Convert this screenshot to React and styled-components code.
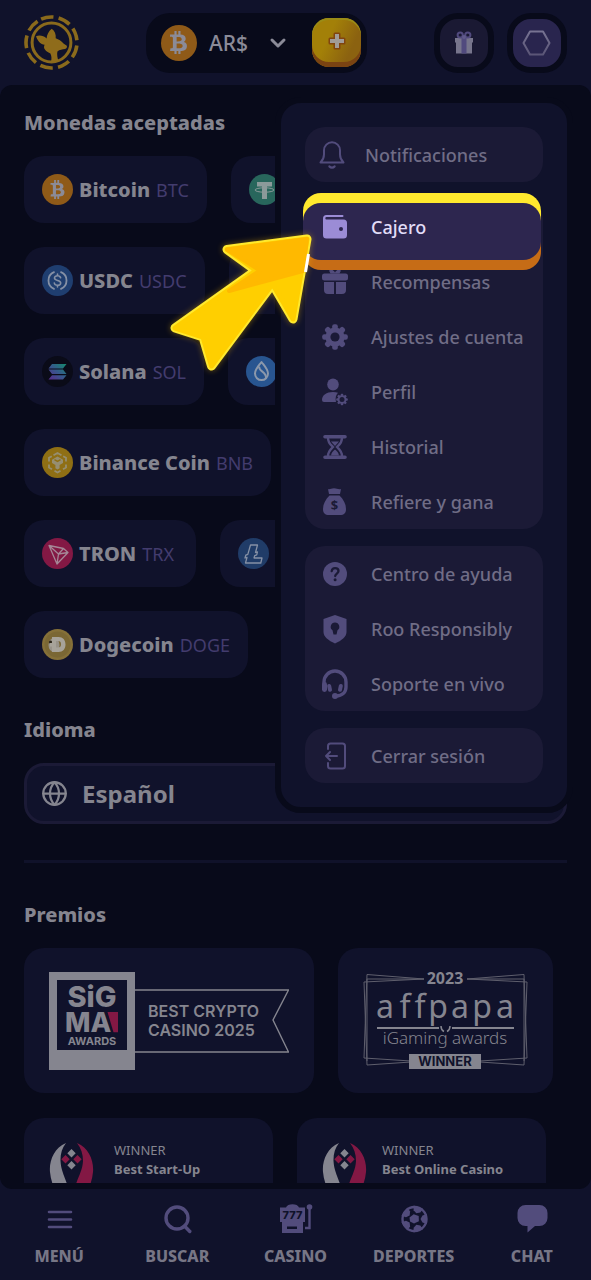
import styled, { createGlobalStyle } from "styled-components";
import { FaBtc } from "react-icons/fa";
import { ChevronDown, Globe } from "lucide-react";

const GlobalStyle = createGlobalStyle`
  :root {
    --panel: #10122b;
    --deep: #080a1a;
    --group: #1b1a36;
    --text: #85858f;
    --menu-text: #706d86;
    --violet: #524c7c;
    --code: #433c6e;
    --silver: #85858f;
    --crimson: #831844;
  }

  * {
    box-sizing: border-box;
  }

  body {
    margin: 0;
    background: var(--panel);
    color: var(--text);
    font-family: "Noto Sans", "Open Sans", sans-serif;
  }

  button,
  select {
    font: inherit;
    color: inherit;
    border: 0;
    background: none;
    padding: 0;
  }

  svg {
    display: block;
    flex: none;
  }
`;

const Shell = styled.div`
  display: flex;
  flex-direction: column;
  height: 100vh;
  overflow: hidden;
`;

/* ---------- header ---------- */

const Header = styled.header`
  display: flex;
  align-items: center;
  justify-content: space-between;
  height: 85px;
  flex: none;
  padding: 0 24px;
`;

const Wallet = styled.div`
  display: flex;
  align-items: center;
  height: 60px;
  padding: 0 6px 0 15px;
  border-radius: 24px;
  background: var(--deep);
`;

const CurrencyButton = styled.button`
  display: flex;
  align-items: center;
  gap: 12px;
  margin-right: 22px;
  font-size: 21px;
  font-weight: 500;
  color: #8b8b98;

  & > svg:last-child {
    margin-left: 6px;
  }
`;

const Coin = styled.span`
  display: flex;
  align-items: center;
  justify-content: center;
  flex: none;
  width: ${(p) => p.$size || 31}px;
  height: ${(p) => p.$size || 31}px;
  border-radius: 50%;
  overflow: hidden;
  color: #8b8b98;
  background: ${(p) => p.$color};
`;

const AddButton = styled.button`
  display: flex;
  align-items: center;
  justify-content: center;
  width: 49px;
  height: 49px;
  padding-bottom: 3px;
  border-radius: 17px;
  background: linear-gradient(115deg, #a38008 35%, #8b6210 75%);
  box-shadow: inset 0 -5px 0 #7a4312, inset 0 2px 0 #9a8c17;
`;

const Actions = styled.div`
  display: flex;
  gap: 13px;
`;

const RoundButton = styled.button`
  display: flex;
  align-items: center;
  justify-content: center;
  width: 60px;
  height: 60px;
  border: 6px solid var(--deep);
  border-radius: 24px;
  background: ${(p) => (p.$active ? "#29254e" : "#1a1933")};
`;

/* ---------- page ---------- */

const Main = styled.main`
  position: relative;
  display: flex;
  flex: 1;
  min-height: 0;
  padding-bottom: 6px;
  border-radius: 12px;
  background: var(--deep);
`;

const Scroller = styled.div`
  flex: 1;
  min-width: 0;
  overflow: hidden;
  padding: 26px 24px 0;
`;

const Title = styled.h2`
  margin: 0 0 22px;
  font-size: 20px;
  line-height: 23px;
  font-weight: 800;
`;

const Section = styled.section`
  margin-bottom: 40px;
`;

const CoinRow = styled.div`
  display: flex;
  gap: 24px;
  margin-bottom: 24px;

  &:last-child {
    margin-bottom: 0;
  }
`;

const CoinCard = styled.div`
  display: flex;
  align-items: center;
  flex: none;
  gap: 6px;
  min-width: 172px;
  height: 67px;
  padding: 0 18px;
  border-radius: 20px;
  background: var(--panel);
`;

const CoinName = styled.span`
  font-size: 20px;
  font-weight: 800;
`;

const CoinCode = styled.span`
  font-size: 18px;
  color: var(--code);
`;

const LanguageBox = styled.label`
  display: flex;
  align-items: center;
  gap: 14px;
  height: 61px;
  padding: 0 14px;
  border: 3px solid var(--group);
  border-radius: 20px;
  background: var(--panel);
`;

const LanguageSelect = styled.select`
  flex: 1;
  appearance: none;
  font-size: 24px;
  font-weight: 700;
`;

const Divider = styled.hr`
  height: 3px;
  margin: -4px 0 40px;
  border: 0;
  background: #10122a;
`;

const AwardRow = styled.div`
  display: flex;
  gap: 24px;
  margin-bottom: 25px;
`;

const AwardCard = styled.div`
  display: flex;
  align-items: center;
  flex: none;
  gap: ${(p) => p.$gap || 0}px;
  min-width: ${(p) => (p.$gap ? 249 : 0)}px;
  height: 145px;
  padding: 0 25px;
  border-radius: 20px;
  background: var(--panel);
`;

const AwardText = styled.p`
  align-self: flex-start;
  margin: 23px 0 0;
  font-size: 13px;
  line-height: 19px;
  font-weight: 700;
  white-space: nowrap;

  span {
    display: block;
    font-weight: 400;
  }
`;

/* ---------- account menu ---------- */

const Menu = styled.nav`
  position: absolute;
  top: 12px;
  right: 18px;
  display: flex;
  flex-direction: column;
  gap: 17px;
  width: 298px;
  padding: 24px;
  border: 6px solid var(--deep);
  border-radius: 26px;
  background: var(--panel);
`;

const MenuGroup = styled.div`
  border-radius: 20px;
  background: var(--group);
`;

const MenuItem = styled.button`
  position: relative;
  z-index: ${(p) => (p.$active ? 1 : 0)};
  display: flex;
  align-items: center;
  gap: ${(p) => (p.$tight ? 19 : 23)}px;
  width: 100%;
  height: 55px;
  padding-left: ${(p) => (p.$tight ? 13 : 17)}px;
  font-size: 18px;
  font-weight: 500;
  text-align: left;
  color: ${(p) => (p.$active ? "#e2ddf8" : "var(--menu-text)")};

  & > svg {
    position: relative;
    color: ${(p) => (p.$active ? "#9b8cd6" : "var(--violet)")};
  }

  & > span {
    position: relative;
  }
`;

const Highlight = styled.i`
  position: absolute;
  inset: -6px 2px -16px -2px;
  padding: 10px 0;
  border-radius: 18px;
  background: linear-gradient(#ffe92e 50%, #c66c16 50%);

  &::before {
    content: "";
    display: block;
    height: 100%;
    border-radius: 18px;
    background: #2d264f;
  }
`;

const Pointer = styled.svg`
  position: absolute;
  z-index: 2;
  top: 140px;
  right: 271px;
  filter: drop-shadow(0 0 3px rgba(255, 190, 0, 0.4));
`;

/* ---------- bottom bar ---------- */

const TabBar = styled.nav`
  display: grid;
  grid-template-columns: repeat(5, 1fr);
  flex: none;
  height: 91px;
`;

const Tab = styled.a`
  display: flex;
  flex-direction: column;
  align-items: center;
  gap: 7px;
  padding-top: 12px;
  font-size: 16px;
  line-height: 24px;
  font-weight: 800;
  text-decoration: none;
  color: #777686;

  & > svg {
    color: var(--violet);
  }
`;

/* ---------- drawings ---------- */

const Gear = ({ cx, cy, r, hole, bg }) => (
  <g>
    {[0, 45, 90, 135].map((a) => (
      <rect
        key={a}
        x={cx - r * 0.22}
        y={cy - r}
        width={r * 0.44}
        height={r * 2}
        rx={r * 0.16}
        fill="currentColor"
        transform={`rotate(${a} ${cx} ${cy})`}
      />
    ))}
    <circle cx={cx} cy={cy} r={r * 0.75} fill="currentColor" />
    <circle cx={cx} cy={cy} r={hole} fill={bg} />
  </g>
);

const Logo = () => (
  <svg width="55" height="55" viewBox="0 0 55 55" fill="none">
    <g stroke="#8a6a1c">
      <circle
        cx="27.5"
        cy="27.5"
        r="25.5"
        strokeWidth="3.6"
        strokeDasharray="12.6 5.2"
        transform="rotate(-114 27.5 27.5)"
      />
      <circle cx="27.5" cy="27.5" r="19.4" strokeWidth="3" />
    </g>
    <path
      d="M12 21.200c3.500-1.200 7.500-.6 10.600 2.200.2-3.600 2-7 5.100-9.600 3 2.200 4.500 5.600 4 9.400 3 1 5.600 2.800 7.800 5.200l3.300 2.400c.6 1.600-.2 2.600-1.800 3.200-2.400.6-5.400.6-7.600 2.400-.6 3 0 6.400 1.200 9.600-2.400 1.200-5 1.400-7.600.6.800-3.200.6-5.600-.6-8.200-2.600-.8-4.800-2.400-6-4.600-.6-1.400-.4-2.600.2-4-3.800-.6-7-3.600-8.600-8.600z"
      fill="#8f6c1b"
    />
  </svg>
);

const PlusIcon = () => (
  <svg width="20" height="20" viewBox="0 0 20 20">
    <path
      d="M8 3h4v5h5v4h-5v5H8v-5H3V8h5z"
      fill="#a19c98"
      stroke="#81450f"
      strokeWidth="3"
      strokeLinejoin="round"
      paintOrder="stroke"
    />
  </svg>
);

const GiftIcon = () => (
  <svg width="18" height="24" viewBox="0 0 18 24">
    <path d="M1 11h16v11.500H1zM0 7h18v4.600H0z" fill="#77758c" />
    <path d="M6.500 7h5v15.500h-5z" fill="#514a7e" />
    <g fill="none" stroke="#514a7e" strokeWidth="2">
      <circle cx="5.200" cy="4" r="2.600" />
      <circle cx="12.800" cy="4" r="2.600" />
    </g>
    <circle cx="9" cy="6" r="2" fill="#605a8c" />
  </svg>
);

const HexIcon = () => (
  <svg width="29" height="26" viewBox="0 0 29 26" fill="none">
    <defs>
      <linearGradient id="hex" x1="0" y1="0" x2="0" y2="1">
        <stop offset="0" stopColor="#777392" />
        <stop offset="1" stopColor="#5b5677" />
      </linearGradient>
    </defs>
    <path d="M8 1.500h13L27.500 13 21 24.500H8L1.500 13z" stroke="url(#hex)" strokeWidth="2" strokeLinejoin="round" />
  </svg>
);

const Tether = () => (
  <svg width="31" height="31" viewBox="0 0 31 31" fill="none">
    <path d="M8 8h15v4.400h-5V25h-5V12.400H8z" fill="#8b9a9a" />
    <ellipse cx="15.500" cy="16" rx="9.500" ry="2.200" stroke="#8b9a9a" strokeWidth="1" />
  </svg>
);

const Usdc = () => (
  <svg width="31" height="31" viewBox="0 0 31 31" fill="none" stroke="#8590a5" strokeWidth="1.800" strokeLinecap="round">
    <path d="M12 7.200a9 9 0 0 0 0 16.600M19 7.200a9 9 0 0 1 0 16.600" />
    <path d="M18.600 12.800c-.4-1.400-1.600-2-3.100-2-1.700 0-3 .8-3 2.300 0 3.200 6.200 1.600 6.200 4.800 0 1.500-1.400 2.300-3.200 2.300-1.700 0-3-.8-3.200-2.200M15.500 9v1.600M15.500 20.400V22" strokeWidth="1.600" />
  </svg>
);

const Solana = () => (
  <svg width="31" height="31" viewBox="0 0 31 31">
    <defs>
      <linearGradient id="sol" x1="1" y1="0" x2="0" y2="1">
        <stop offset="0" stopColor="#148a6c" />
        <stop offset=".5" stopColor="#36588c" />
        <stop offset="1" stopColor="#592a8c" />
      </linearGradient>
    </defs>
    <path
      d="M10 8h14.500L21 12.400H6.500zM6.500 13.600H21l3.500 4.400H10zM10 19.200h14.500L21 23.600H6.500z"
      fill="url(#sol)"
    />
  </svg>
);

const Sui = () => (
  <svg width="31" height="31" viewBox="0 0 31 31" fill="none" stroke="#8b98ab" strokeWidth="2" strokeLinejoin="round">
    <path d="M15.500 6c3 4 6.500 7.400 6.500 11.600a6.500 6.500 0 0 1-13 0C9 13.400 12.500 10 15.500 6z" />
    <path d="M13 10.500c0 5.500 7.500 5 7 11.500" />
  </svg>
);

const Bnb = () => (
  <svg width="31" height="31" viewBox="0 0 31 31" fill="none" stroke="#968e70" strokeWidth="1.800">
    <path d="M11.500 8.300l4-2.300 4 2.300M7 14.500v-3.700l2.800-1.600M24 14.500v-3.700l-2.800-1.600M7 17.500v3l3 1.700M24 17.500v3l-3 1.700M12.500 23.800l3 1.700 3-1.700" />
    <path d="M15.500 9.500l5.500 3.200v3.200l-3.400 2v3.400l-2.100 1.300-2.100-1.300v-3.400l-3.400-2v-3.200z" fill="#968e70" stroke="none" />
    <path d="M12.500 12.600l3 1.800 3-1.800" stroke="#8f6f14" strokeWidth="1.400" />
  </svg>
);

const Tron = () => (
  <svg width="31" height="31" viewBox="0 0 31 31" fill="none" stroke="#a58796" strokeWidth="1.300" strokeLinejoin="round">
    <path d="M7 7.500l14.500 3 4.500 4L15 26zM7 7.500l9.500 8.500L15 26M16.500 16l9.500-1.500M16.500 16l5-5.500" />
  </svg>
);

const Litecoin = () => (
  <svg width="31" height="31" viewBox="0 0 31 31" fill="none" stroke="#8590a5" strokeWidth="1.300" strokeLinejoin="round">
    <path d="M12.500 7h7l-2 7.500 2-.6-.8 3-2 .7-.7 2.400h8l-1.200 5H7.500l1.500-5.600-2 .6.800-2.800 2-.8z" />
  </svg>
);

const Doge = () => (
  <svg width="31" height="31" viewBox="0 0 31 31">
    <circle cx="15.500" cy="15.500" r="13" fill="#7a6734" />
    <ellipse cx="12" cy="16" rx="5.500" ry="7" fill="#98938a" />
    <circle cx="8.500" cy="13" r="1.600" fill="#2b2518" />
    <path
      fillRule="evenodd"
      d="M10 8h6.500c4.500 0 7 3 7 7.500s-2.500 7.500-7 7.500H10v-5.500H8v-3.500h2zm4 4v6.500h2c2 0 3-1 3-3.300S18 12 16 12z"
      fill="#a7a39a"
    />
  </svg>
);

const BellIcon = () => (
  <svg width="28" height="28" viewBox="0 0 28 28" fill="none" stroke="currentColor" strokeWidth="2" strokeLinejoin="round" strokeLinecap="round">
    <path d="M2.500 21.500c2.500-2.500 3.500-4.500 3.500-8V9.300a8 8 0 0 1 16 0v4.200c0 3.500 1 5.500 3.500 8z" />
    <path d="M11.500 25.500c1.400 1.500 3.600 1.500 5 0" strokeWidth="2.400" />
  </svg>
);

const WalletIcon = () => (
  <svg width="26" height="26" viewBox="0 0 26 26">
    <path d="M4.500 1H20.500a1 1 0 0 1 0 2H4.500a1.200 1.200 0 0 0 0 2.400h17A3.500 3.500 0 0 1 25 8.900v12.100a3.500 3.500 0 0 1-3.500 3.500h-17A3.500 3.500 0 0 1 1 21V4.500A3.500 3.500 0 0 1 4.500 1z" fill="currentColor" />
    <circle cx="19" cy="15" r="2" fill="#2d264f" />
  </svg>
);

const RewardsIcon = () => (
  <svg width="26" height="26" viewBox="0 0 26 26" fill="currentColor">
    <path d="M7 1.500c3-2 5 0 6 2 1-2 3-4 6-2l-1.500 3h-9z" />
    <rect x="0" y="4.500" width="26" height="7" rx="2.500" />
    <path d="M2 13h10v12H6a4 4 0 0 1-4-4zM14 13h10v8a4 4 0 0 1-4 4h-6z" />
  </svg>
);

const SettingsIcon = () => (
  <svg width="26" height="26" viewBox="0 0 26 26">
    <Gear cx={13} cy={13} r={12.800} hole={4.600} bg="#1b1a36" />
  </svg>
);

const ProfileIcon = () => (
  <svg width="26" height="28" viewBox="0 0 26 28">
    <ellipse cx="11" cy="6.500" rx="5.800" ry="6" fill="currentColor" />
    <path d="M0 22c0-5 4.500-8 11-8 2 0 3.600.3 5 .8-2 2-3 5-2 9.200H2a2 2 0 0 1-2-2z" fill="currentColor" />
    <Gear cx={20} cy={21.500} r={5.800} hole={2.500} bg="#1b1a36" />
  </svg>
);

const HourglassIcon = () => (
  <svg width="26" height="26" viewBox="0 0 26 26">
    <path d="M3 1h20a1 1 0 0 1 0 3.600H3A1 1 0 0 1 3 1zM3 21.400h20a1 1 0 0 1 0 3.600H3a1 1 0 0 1 0-3.600z" fill="currentColor" />
    <path d="M6 4c0 5 2.500 6.500 5 9-2.500 2.500-5 4-5 9M20 4c0 5-2.500 6.500-5 9 2.500 2.500 5 4 5 9" fill="none" stroke="currentColor" strokeWidth="2.400" />
    <path d="M9 7.500h8L13 12zM9 21.500c.5-3 2-4.500 4-6 2 1.500 3.500 3 4 6z" fill="currentColor" />
  </svg>
);

const DollarMark = styled.text`
  font-size: 13px;
  font-weight: 700;
  text-anchor: middle;
  fill: #1b1a36;
`;

const BagIcon = () => (
  <svg width="26" height="28" viewBox="0 0 26 28">
    <path d="M6 1c2 .8 3-.8 6-.8s4 1.600 7 .8l-1 5h-11zM7.500 7.500h10c4 4 6.500 8.500 6.500 13.500 0 4-2 6-6 6h-11c-4 0-6-2-6-6C1 16 3.500 11.500 7.500 7.500z" fill="currentColor" />
    <DollarMark x="12.500" y="22">$</DollarMark>
  </svg>
);

const HelpIcon = () => (
  <svg width="26" height="26" viewBox="0 0 26 26" fill="none">
    <circle cx="13" cy="13" r="12" fill="currentColor" />
    <path d="M9.700 10.200c.3-2 1.600-3 3.400-3s3.400 1.100 3.400 2.900c0 2.400-3.300 2.600-3.300 5" stroke="#1b1a36" strokeWidth="2.300" strokeLinecap="round" />
    <circle cx="13.100" cy="18.700" r="1.500" fill="#1b1a36" />
  </svg>
);

const ShieldIcon = () => (
  <svg width="26" height="30" viewBox="0 0 26 30">
    <path d="M13 1l11.500 4v13c0 5-5 8.500-11.500 11.500C6.500 26.500 1.500 23 1.500 18V5z" fill="currentColor" />
    <path d="M13 8.500a4.300 4.300 0 0 1 2.500 7.800l-1 4.200h-3l-1-4.200A4.300 4.300 0 0 1 13 8.500z" fill="#1b1a36" />
  </svg>
);

const HeadsetIcon = () => (
  <svg width="26" height="30" viewBox="0 0 26 30" fill="none">
    <path d="M2 16v-3a11 11 0 0 1 22 0v5c0 5-3.500 9-10 9" stroke="currentColor" strokeWidth="3.400" />
    <rect x="0" y="13" width="5" height="10" rx="2.400" fill="currentColor" />
    <rect x="5.600" y="15" width="4" height="8" rx="2" fill="currentColor" transform="rotate(-12 7 19)" />
    <rect x="16.400" y="15" width="4" height="8" rx="2" fill="currentColor" transform="rotate(12 19 19)" />
    <circle cx="13" cy="27" r="3" fill="currentColor" />
  </svg>
);

const LogoutIcon = () => (
  <svg width="26" height="28" viewBox="0 0 26 28" fill="none" stroke="currentColor" strokeWidth="2" strokeLinecap="round" strokeLinejoin="round">
    <path d="M6 7V4a2.500 2.500 0 0 1 2.500-2.500h12A2.500 2.500 0 0 1 23 4v20a2.500 2.500 0 0 1-2.500 2.500h-12A2.500 2.500 0 0 1 6 24v-3" />
    <path d="M15 14H4M8 10l-4 4 4 4" />
  </svg>
);

const LogoText = styled.text`
  font-family: ${(p) => (p.$humanist ? '"Noto Sans"' : "Inter")}, sans-serif;
  font-size: ${(p) => p.$size}px;
  font-weight: ${(p) => p.$weight || 700};
  fill: ${(p) => p.$fill || "var(--silver)"};
  text-anchor: ${(p) => (p.$start ? "start" : "middle")};
`;

const SigmaAward = () => (
  <svg width="240" height="98" viewBox="0 0 240 98" fill="none">
    <path fillRule="evenodd" d="M0 0h86v98H0zM8 8v70h70V8z" fill="#85858f" />
    <path d="M86 18h153.500L224 48l15.500 32H86" stroke="#85858f" strokeWidth="1.400" />
    <LogoText x="43" y="35" $size={29} $weight={800}>SiG</LogoText>
    <LogoText x="16" y="60" $size={27} $weight={800} $start>MA</LogoText>
    <path d="M58.500 40H69v20.300h-4.500z" fill="#831844" />
    <LogoText x="43" y="73" $size={11}>AWARDS</LogoText>
    <LogoText x="99" y="45" $size={16} $weight={600} $start>BEST CRYPTO</LogoText>
    <LogoText x="99" y="64" $size={16} $weight={600} $start>CASINO 2025</LogoText>
  </svg>
);

const AffpapaAward = () => (
  <svg width="165" height="118" viewBox="0 -10 165 118" fill="none">
    <g stroke="#5f5f6d" strokeWidth="1">
      <path d="M61 7L4 2.500 1 86l47 3M61 7L1 10l3 83 44-3M61 7H4v82" />
      <path d="M104 7l57-4.500 3 83.500-47 3M104 7l60 3-3 83-44-3M104 7h57v82" />
    </g>
    <LogoText x="82" y="12" $size={16} $weight={700} $humanist>2023</LogoText>
    <LogoText x="22 42 57 75 97 119 142" y="46" $size={32} $humanist $weight={400}>affpapa</LogoText>
    <path d="M14 56h62M89 56h62" stroke="#85858f" strokeWidth="2" />
    <path d="M78 54c0 3 1 4.500 3 5.500M87 54c0 3-1 4.500-3 5.500" stroke="#85858f" strokeWidth="1.500" />
    <LogoText x="82" y="72" $size={17} $weight={300} $humanist>iGaming awards</LogoText>
    <path d="M46 82h72v15H46z" fill="#85858f" />
    <LogoText x="82" y="94" $size={13} $fill="#10122b">WINNER</LogoText>
  </svg>
);

const WinnerMark = () => (
  <svg width="45" height="96" viewBox="0 0 45 96">
    <path d="M17 0C5 5 0 18 1 29c1 12 7 24 16 34 3-8 3-14 1-22-3-9-6-14-6.500-23C11.300 11 13 5 17 0z" fill="#85858f" />
    <path d="M28 0c12 5 17 18 16 29-1 12-7 24-16 34-3-8-3-14-1-22 3-9 6.500-14 7-23C34 11 32 5 28 0z" fill="#831844" />
    <path d="M22.500 6l4.200 4.200-4.200 4.200-4.200-4.200zM22.500 18l4.200 4.200-4.200 4.200-4.200-4.200z" fill="#85858f" />
    <path d="M16.500 12l4.200 4.200-4.200 4.200-4.200-4.200zM28.500 12l4.200 4.200-4.200 4.200-4.200-4.200z" fill="#831844" />
  </svg>
);

const MenuLines = () => (
  <svg width="36" height="36" viewBox="0 0 36 36" stroke="currentColor" strokeWidth="2.600" strokeLinecap="round">
    <path d="M8 11h22M8 18.500h22M8 26h22" />
  </svg>
);

const SearchIcon = () => (
  <svg width="36" height="36" viewBox="0 0 36 36" fill="none" stroke="currentColor" strokeWidth="3.400" strokeLinecap="round">
    <circle cx="18" cy="17" r="11" />
    <path d="M25.500 25l5.300 5.500" />
  </svg>
);

const SlotIcon = () => (
  <svg width="36" height="36" viewBox="0 0 36 36">
    <path d="M3 6.500h6c1-4.500 12-4.500 13 0h6V21H3z" fill="currentColor" />
    <path d="M5 20h21v12H5z" fill="currentColor" />
    <path d="M10 25.500h10V28H10z" fill="#10122b" />
    <path d="M28 27h4.500V6" fill="none" stroke="currentColor" strokeWidth="2.400" />
    <circle cx="32.500" cy="6" r="2.800" fill="currentColor" />
    <LogoText x="15.500" y="18" $size={11} $fill="#10122b" $weight={800}>777</LogoText>
  </svg>
);

const BallIcon = () => (
  <svg width="36" height="36" viewBox="0 0 36 36">
    <circle cx="18.500" cy="18" r="12" fill="#10122b" stroke="currentColor" strokeWidth="2.400" />
    <g fill="currentColor">
      {[0, 72, 144, 216, 288].map((a) => (
        <path key={a} d="M13.500 5.500h10L22 10l-3.500 2-3.500-2z" transform={`rotate(${a + 18} 18.500 18)`} />
      ))}
      <path d="M13.500 16.400l4.200-3.200 5 1.800.2 5.200-4.900 2.200-4-2z" />
    </g>
  </svg>
);

const ChatIcon = () => (
  <svg width="36" height="36" viewBox="0 0 36 36" fill="currentColor">
    <path d="M11.500 4h14a8 8 0 0 1 8 8v5a8 8 0 0 1-8 8h-4.500l-7.500 6.500V25h-2a8 8 0 0 1-8-8v-5a8 8 0 0 1 8-8z" />
  </svg>
);

/* ---------- data ---------- */

const coins = [
  [
    { name: "Bitcoin", code: "BTC", color: "#8f5a18", icon: <FaBtc size={19} /> },
    { name: "Tether", code: "USDT", color: "#28665c", icon: <Tether /> },
  ],
  [
    { name: "USDC", code: "USDC", color: "#1f3e70", icon: <Usdc /> },
    { name: "Ethereum", code: "ETH", color: "#191d3c" },
  ],
  [
    { name: "Solana", code: "SOL", color: "#0a0b18", icon: <Solana /> },
    { name: "Sui", code: "SUI", color: "#285590", icon: <Sui /> },
  ],
  [{ name: "Binance Coin", code: "BNB", color: "#8f6f14", icon: <Bnb /> }],
  [
    { name: "TRON", code: "TRX", color: "#831844", icon: <Tron /> },
    { name: "Litecoin", code: "LTC", color: "#203c68", icon: <Litecoin /> },
  ],
  [{ name: "Dogecoin", code: "DOGE", color: "#857038", icon: <Doge /> }],
];

const menu = [
  [{ label: "Notificaciones", icon: <BellIcon />, tight: true }],
  [
    { label: "Cajero", icon: <WalletIcon />, active: true },
    { label: "Recompensas", icon: <RewardsIcon /> },
    { label: "Ajustes de cuenta", icon: <SettingsIcon /> },
    { label: "Perfil", icon: <ProfileIcon /> },
    { label: "Historial", icon: <HourglassIcon /> },
    { label: "Refiere y gana", icon: <BagIcon /> },
  ],
  [
    { label: "Centro de ayuda", icon: <HelpIcon /> },
    { label: "Roo Responsibly", icon: <ShieldIcon /> },
    { label: "Soporte en vivo", icon: <HeadsetIcon /> },
  ],
  [{ label: "Cerrar sesión", icon: <LogoutIcon /> }],
];

const tabs = [
  { label: "MENÚ", icon: <MenuLines /> },
  { label: "BUSCAR", icon: <SearchIcon /> },
  { label: "CASINO", icon: <SlotIcon /> },
  { label: "DEPORTES", icon: <BallIcon /> },
  { label: "CHAT", icon: <ChatIcon /> },
];

function AccountMenu() {
  return (
    <Menu aria-label="Cuenta">
      {menu.map((group, i) => (
        <MenuGroup key={i}>
          {group.map((item) => (
            <MenuItem key={item.label} $active={item.active} $tight={item.tight}>
              {item.active && <Highlight />}
              {item.icon}
              <span>{item.label}</span>
            </MenuItem>
          ))}
        </MenuGroup>
      ))}
    </Menu>
  );
}

function Arrow() {
  const shape = "M307 239L227 249.500 256 270.500 175 328 203 337 211.500 366 272.500 284 293 319z";
  return (
    <Pointer width="160" height="160" viewBox="160 225 160 160" aria-hidden="true">
      <path d={shape} fill="#ffe92e" stroke="#ffe92e" strokeWidth="9" strokeLinejoin="round" />
      <path d={shape} fill="#ffcf00" stroke="#ffcf00" strokeWidth="5" strokeLinejoin="round" />
      <path
        d="M307 239L227 249.500 260 270.500 229 291 303 271z"
        fill="#ffb900"
        stroke="#ffb900"
        strokeWidth="4"
        strokeLinejoin="round"
      />
      <path d="M308.500 254l-3 18" stroke="#fff" strokeWidth="3" />
    </Pointer>
  );
}

function App() {
  return (
    <Shell>
      <GlobalStyle />
      <Header>
        <Logo />
        <Wallet>
          <CurrencyButton>
            <Coin $size={36} $color="#8f5a18">
              <FaBtc size={23} />
            </Coin>
            AR$
            <ChevronDown size={24} strokeWidth={3} />
          </CurrencyButton>
          <AddButton aria-label="Depositar">
            <PlusIcon />
          </AddButton>
        </Wallet>
        <Actions>
          <RoundButton aria-label="Regalos">
            <GiftIcon />
          </RoundButton>
          <RoundButton aria-label="Cuenta" $active>
            <HexIcon />
          </RoundButton>
        </Actions>
      </Header>

      <Main>
        <Scroller>
          <Section>
            <Title>Monedas aceptadas</Title>
            {coins.map((row, i) => (
              <CoinRow key={i}>
                {row.map((coin) => (
                  <CoinCard key={coin.name}>
                    <Coin $color={coin.color}>{coin.icon}</Coin>
                    <CoinName>{coin.name}</CoinName>
                    <CoinCode>{coin.code}</CoinCode>
                  </CoinCard>
                ))}
              </CoinRow>
            ))}
          </Section>

          <Section>
            <Title>Idioma</Title>
            <LanguageBox>
              <Globe size={27} strokeWidth={2} />
              <LanguageSelect aria-label="Idioma" defaultValue="es">
                <option value="es">Español</option>
              </LanguageSelect>
            </LanguageBox>
          </Section>

          <Divider />

          <Section>
            <Title>Premios</Title>
            <AwardRow>
              <AwardCard>
                <SigmaAward />
              </AwardCard>
              <AwardCard>
                <AffpapaAward />
              </AwardCard>
            </AwardRow>
            <AwardRow>
              <AwardCard $gap={20}>
                <WinnerMark />
                <AwardText>
                  <span>WINNER</span>
                  Best Start-Up
                </AwardText>
              </AwardCard>
              <AwardCard $gap={15}>
                <WinnerMark />
                <AwardText>
                  <span>WINNER</span>
                  Best Online Casino
                </AwardText>
              </AwardCard>
            </AwardRow>
          </Section>
        </Scroller>
        <AccountMenu />
        <Arrow />
      </Main>

      <TabBar>
        {tabs.map((tab) => (
          <Tab key={tab.label} href="#">
            {tab.icon}
            {tab.label}
          </Tab>
        ))}
      </TabBar>
    </Shell>
  );
}

export default App;
